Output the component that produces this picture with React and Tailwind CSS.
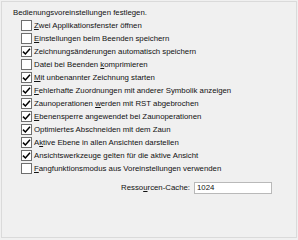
import React from "react";

const rows = [
  { pre: "", u: "Z", post: "wei Applikationsfenster öffnen", c: false },
  { pre: "", u: "E", post: "instellungen beim Beenden speichern", c: false },
  { pre: "Zeichnungsänderungen automatisch speichern", u: "", post: "", c: true },
  { pre: "Datei bei Beenden ", u: "k", post: "omprimieren", c: false },
  { pre: "", u: "M", post: "it unbenannter Zeichnung starten", c: true },
  { pre: "", u: "F", post: "ehlerhafte Zuordnungen mit anderer Symbolik anzeigen", c: true },
  { pre: "Zaunoperationen ", u: "w", post: "erden mit RST abgebrochen", c: true },
  { pre: "", u: "E", post: "benensperre angewendet bei Zaunoperationen", c: true },
  { pre: "Optimiertes Abschneiden mit dem Zaun", u: "", post: "", c: true },
  { pre: "A", u: "k", post: "tive Ebene in allen Ansichten darstellen", c: true },
  { pre: "Ansichtswerkzeuge gelten für die aktive Ansicht", u: "", post: "", c: true },
  { pre: "", u: "F", post: "angfunktionsmodus aus Voreinstellungen verwenden", c: false },
];

function Box({ checked }) {
  return (
    <div className="w-[11px] h-[11px] border border-[#6e6e6e] bg-white shrink-0 flex items-center justify-center">
      {checked && (
        <svg width="9" height="9" viewBox="0 0 9 9">
          <path d="M1 4.6 L3.4 7 L8 1.8" fill="none" stroke="#000" strokeWidth="1.5" />
        </svg>
      )}
    </div>
  );
}

export default function App() {
  return (
    <div
      className="w-[298px] h-[240px] bg-[#f0f0f0] p-[1px] text-[#111] text-[7.8px]"
      style={{ fontFamily: '"Liberation Sans", Arial, sans-serif' }}
    >
      <div className="w-[296px] h-[237px] border border-[#dadada]">
        <div className="pl-[11px] pt-[5px] h-[17px] leading-[12px]">
          Bedienungsvoreinstellungen festlegen.
        </div>
        <div className="flex flex-col">
          {rows.map((r, i) => (
            <div key={i} className="h-[13px] flex items-center pl-[19px] gap-[2px]">
              <Box checked={r.c} />
              <span className="leading-[12px] whitespace-nowrap">
                {r.pre}
                {r.u && <u className="underline-offset-[1px]">{r.u}</u>}
                {r.post}
              </span>
            </div>
          ))}
        </div>
        <div className="mt-[7px] flex items-center justify-end pr-[24px] gap-[4px]">
          <span className="whitespace-nowrap">
            Resso<u className="underline-offset-[1px]">u</u>rcen-Cache:
          </span>
          <div className="w-[78px] h-[12px] bg-white border border-[#b9b9b9] pl-[2px] leading-[10px]">
            1024
          </div>
        </div>
      </div>
    </div>
  );
}
